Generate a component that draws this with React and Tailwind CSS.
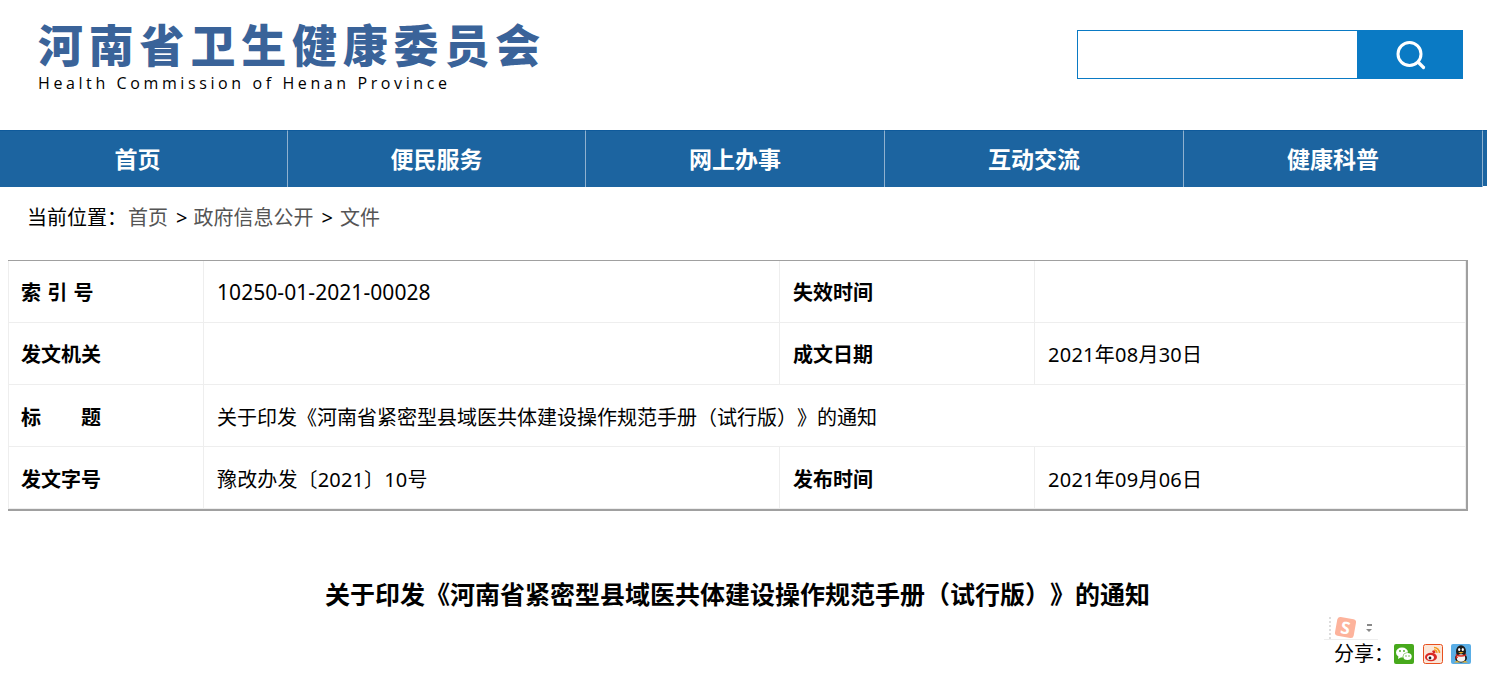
import React from 'react';

const CJK = "font-['Noto_Sans','Noto_Sans_CJK_SC',sans-serif] [text-spacing-trim:space-all]";

const navItems = ['首页', '便民服务', '网上办事', '互动交流', '健康科普'];

const SearchIcon = () => (
  <svg width="30" height="30" viewBox="0 0 30 30" fill="none" stroke="white" strokeLinecap="round">
    <circle cx="13.5" cy="14" r="11.5" strokeWidth="3" />
    <path d="M22.5 22.5 L27.5 27.5" strokeWidth="3.2" />
  </svg>
);

const WechatIcon = () => (
  <svg width="20" height="20" viewBox="0 0 20 20">
    <rect width="20" height="20" rx="2" fill="#47a91c" />
    <ellipse cx="8" cy="8.5" rx="6" ry="5" fill="white" />
    <path d="M4.5 12 L4 15 L7.5 13 Z" fill="white" />
    <ellipse cx="13.5" cy="12.5" rx="4.8" ry="4" fill="#47a91c" />
    <ellipse cx="13.5" cy="12.5" rx="4.2" ry="3.5" fill="white" />
    <circle cx="6" cy="7" r="0.9" fill="#47a91c" />
    <circle cx="10" cy="7" r="0.9" fill="#47a91c" />
    <circle cx="12" cy="12" r="0.7" fill="#47a91c" />
    <circle cx="15" cy="12" r="0.7" fill="#47a91c" />
  </svg>
);

const WeiboIcon = () => (
  <svg width="20" height="20" viewBox="0 0 20 20">
    <rect x="0.5" y="0.5" width="19" height="19" rx="2" fill="#fbe6d8" stroke="#e8501f" />
    <ellipse cx="8" cy="13" rx="6" ry="4.3" fill="#d92a24" />
    <path d="M9 7 Q12 5 12.5 8 Q12.5 10 10 9 Z" fill="#d92a24" />
    <ellipse cx="7.5" cy="13.5" rx="3.4" ry="2.5" fill="white" />
    <circle cx="7" cy="14" r="1.4" fill="#222" />
    <path d="M11 3.5 A5.5 5.5 0 0 1 16.5 9" fill="none" stroke="#f39a1f" strokeWidth="1.5" />
    <path d="M11 6 A3 3 0 0 1 14 9" fill="none" stroke="#f39a1f" strokeWidth="1.3" />
  </svg>
);

const QQIcon = () => (
  <svg width="20" height="20" viewBox="0 0 20 20">
    <rect width="20" height="20" rx="2" fill="#5aaee6" />
    <ellipse cx="10" cy="7.5" rx="5" ry="6.2" fill="#1c1c1c" />
    <ellipse cx="10" cy="14" rx="6" ry="4.6" fill="#1c1c1c" />
    <ellipse cx="10" cy="14" rx="4.2" ry="3.8" fill="#f4f4f4" />
    <ellipse cx="8.2" cy="5.5" rx="1.1" ry="1.5" fill="white" />
    <ellipse cx="11.8" cy="5.5" rx="1.1" ry="1.5" fill="white" />
    <path d="M7.2 8 H12.8 L10 9.7 Z" fill="#f0b020" />
    <path d="M4.8 10 Q10 12.4 15.2 10 L15.2 11.6 Q10 14 4.8 11.6 Z" fill="#d8281e" />
    <path d="M5 11.5 L4.4 15 L7.2 13.4 Z" fill="#d8281e" />
    <path d="M3 18.5 Q6 15.5 9 18.5 Z M17 18.5 Q14 15.5 11 18.5 Z" fill="#f0b020" />
  </svg>
);

const Label = ({ children, className = 'pl-[12px]' }) => (
  <th className={`text-left text-[20px] font-bold text-black border-r border-b border-[#eeeeee] ${className}`}>{children}</th>
);

const Value = ({ children, span, className = 'text-[20px]' }) => (
  <td colSpan={span} className={`pl-[13px] text-left text-black border-r border-b border-[#eeeeee] ${className}`}>{children}</td>
);

export default function App() {
  return (
    <div className={`${CJK} relative h-[678px] overflow-hidden bg-white`}>
      {/* header */}
      <header className="flex h-[130px] items-start justify-between pl-[38px] pr-[24px]">
        <div className="pt-[18px]">
          <h1 className="text-[45px] leading-[56px] font-black tracking-[5.8px] text-[#3a6399] whitespace-nowrap">河南省卫生健康委员会</h1>
          <p className="font-['Open_Sans',sans-serif] text-[16px] leading-[18px] tracking-[3.6px] text-black whitespace-nowrap">Health Commission of Henan Province</p>
        </div>
        <div className="mt-[30px] flex h-[49px] w-[386px]">
          <input className="h-full flex-1 border border-[#0a7ac4] bg-white outline-none" />
          <button className="flex h-full w-[105px] items-center justify-center bg-[#0a7ac4]">
            <SearchIcon />
          </button>
        </div>
      </header>

      {/* nav */}
      <nav className="flex h-[57px]">
        {navItems.map((item, i) => (
          <a
            key={item}
            className={`flex items-center justify-center border-t border-r border-t-[#0f5a9b] border-r-[#8fb1cf] bg-[#1c64a0] text-[23px] font-bold text-white ${i === 0 ? 'w-[288px] pr-[12px]' : i === 1 ? 'w-[298px]' : 'w-[299px]'}`}
          >
            {item}
          </a>
        ))}
        <div className="h-[56px] flex-1 border-t border-[#0f5a9b] bg-[#1c64a0]" />
      </nav>

      {/* breadcrumb */}
      <div className="flex h-[60px] items-center pt-[1px] pl-[27px] text-[20px] text-[#555555] whitespace-nowrap">
        <span className="mr-[1px] text-black">当前位置：</span>
        <span>首页</span>
        <span className="ml-[8px] mr-[6px] text-black">&gt;</span>
        <span>政府信息公开</span>
        <span className="ml-[8px] mr-[7px] text-black">&gt;</span>
        <span>文件</span>
      </div>

      {/* info table */}
      <div className="mt-[13px] ml-[8px] w-[1460px] border-t border-r-2 border-b-2 border-[#a0a0a0]">
        <table className="w-full table-fixed border-separate border-spacing-0 border-l border-[#eeeeee]">
          <colgroup>
            <col className="w-[195px]" />
            <col className="w-[576px]" />
            <col className="w-[255px]" />
            <col />
          </colgroup>
          <tbody>
            <tr className="h-[62px] [&>*]:pt-[3px]">
              <Label><span className="[word-spacing:1px]">索 引 号</span></Label>
              <Value className="text-[21px] tracking-[0.06px]">10250-01-2021-00028</Value>
              <Label className="pl-[13px]">失效时间</Label>
              <Value />
            </tr>
            <tr className="h-[62px] [&>*]:pt-[3px]">
              <Label>发文机关</Label>
              <Value />
              <Label className="pl-[13px]">成文日期</Label>
              <Value className="text-[20px] tracking-[0.25px]">2021年08月30日</Value>
            </tr>
            <tr className="h-[62px] [&>*]:pt-[5px]">
              <Label>标<span className="ml-[40px]">题</span></Label>
              <Value span={3}>关于印发《河南省紧密型县域医共体建设操作规范手册（试行版）》的通知</Value>
            </tr>
            <tr className="h-[62px] [&>*]:pt-[5px]">
              <Label>发文字号</Label>
              <Value className="text-[20px] tracking-[0.15px]">豫改办发〔2021〕10号</Value>
              <Label className="pl-[13px]">发布时间</Label>
              <Value className="text-[20px] tracking-[0.25px]">2021年09月06日</Value>
            </tr>
          </tbody>
        </table>
      </div>

      {/* article title */}
      <h2 className="mt-[65px] w-[1475px] text-center text-[25px] leading-[36px] font-bold text-black whitespace-nowrap">
        关于印发《河南省紧密型县域医共体建设操作规范手册（试行版）》的通知
      </h2>

      {/* share */}
      <div className="absolute top-[640px] right-[16px] flex items-center">
        <span className="text-[20px] leading-[28px] text-black">分享：</span>
        <span className="mr-[9px]"><WechatIcon /></span>
        <span className="mr-[8px]"><WeiboIcon /></span>
        <QQIcon />
      </div>

      {/* sogou input widget */}
      <div className="absolute top-[616px] left-[1324px] flex h-[24px] w-[54px] items-center border-b border-[#eeeeee] pl-[5px]">
        <div className="h-[22px] border-l-2 border-dotted border-[#dddddd]" />
        <div className="ml-[5px] flex h-[19px] w-[19px] rotate-[10deg] items-center justify-center rounded-[3px] bg-[#fdb39c] text-[17px] font-bold leading-none text-white">S</div>
        <div className="ml-[11px] flex flex-col items-center gap-[3px]">
          <div className="h-[2px] w-[5px] bg-[#888888]" />
          <div className="h-0 w-0 border-x-[3px] border-t-[3px] border-x-transparent border-t-[#888888]" />
        </div>
      </div>
    </div>
  );
}
